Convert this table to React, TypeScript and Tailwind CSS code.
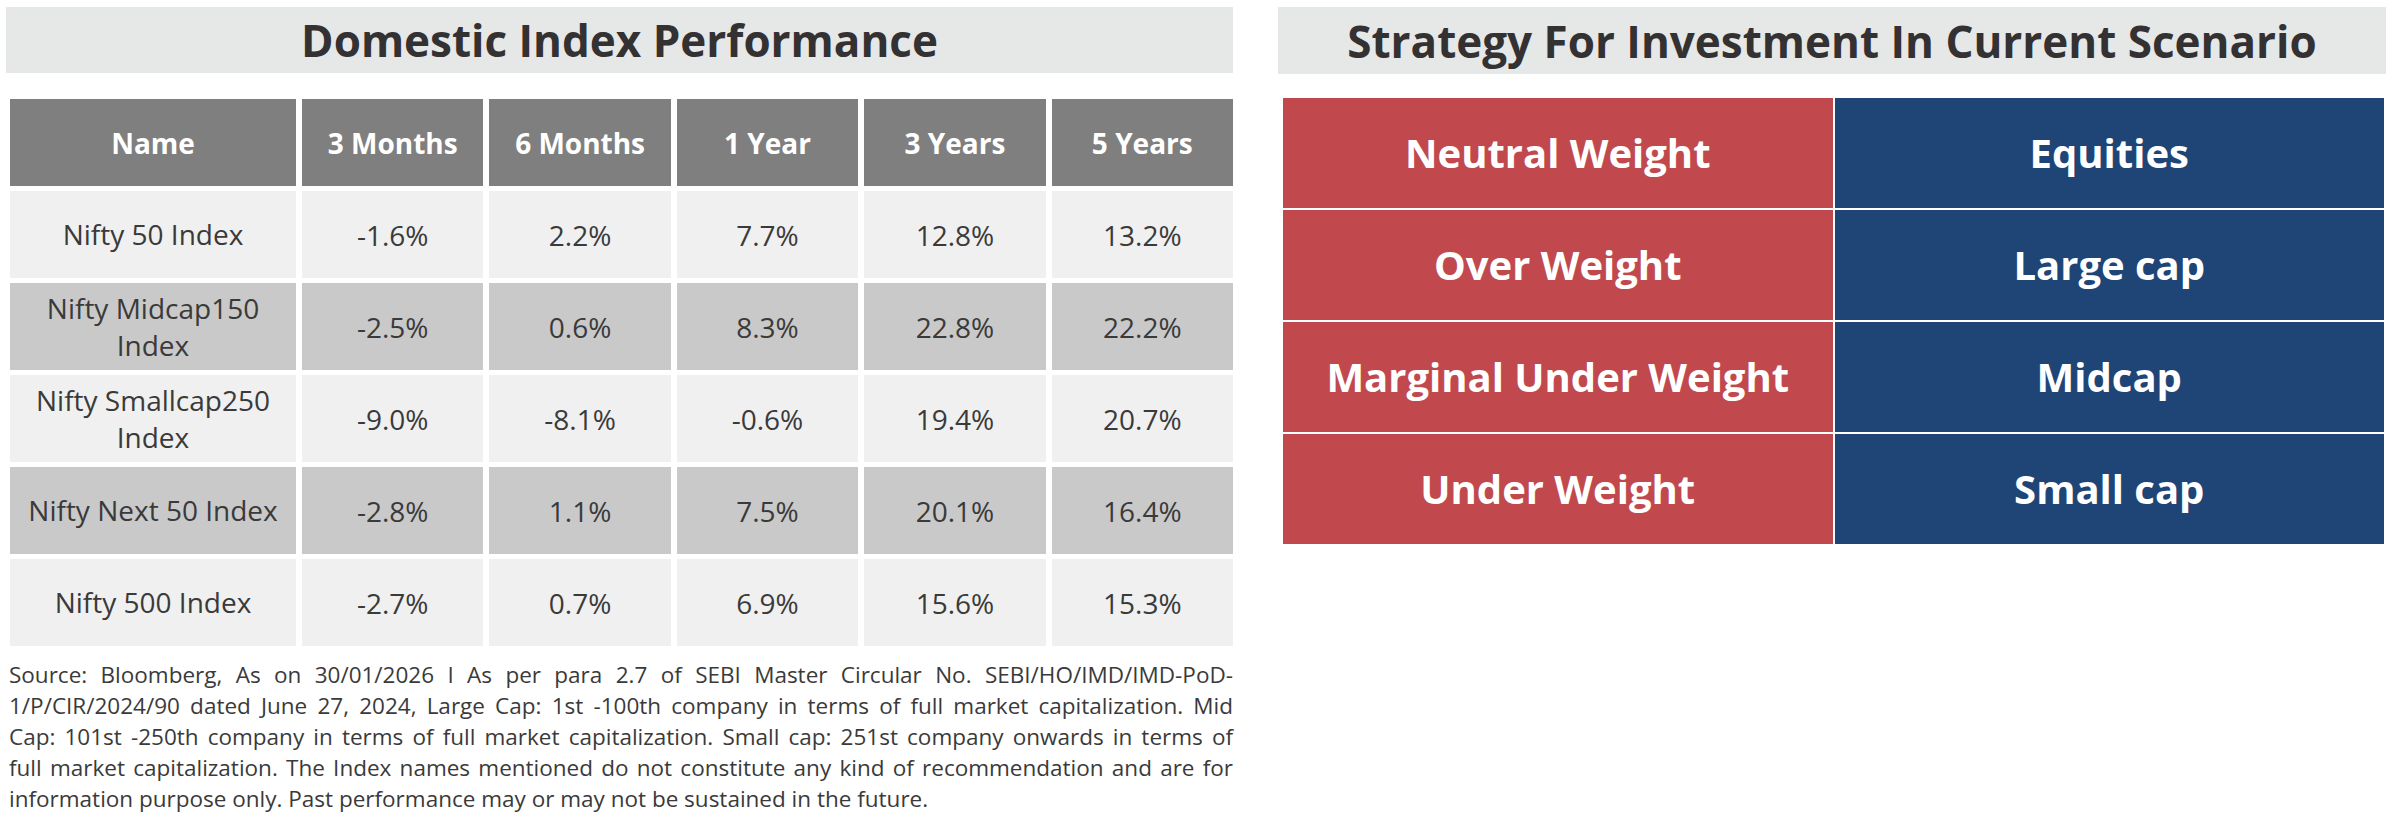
import React from "react";

const rows = [
  { name: ["Nifty 50 Index"], v: ["-1.6%", "2.2%", "7.7%", "12.8%", "13.2%"], dark: false },
  { name: ["Nifty Midcap150", "Index"], v: ["-2.5%", "0.6%", "8.3%", "22.8%", "22.2%"], dark: true },
  { name: ["Nifty Smallcap250", "Index"], v: ["-9.0%", "-8.1%", "-0.6%", "19.4%", "20.7%"], dark: false },
  { name: ["Nifty Next 50 Index"], v: ["-2.8%", "1.1%", "7.5%", "20.1%", "16.4%"], dark: true },
  { name: ["Nifty 500 Index"], v: ["-2.7%", "0.7%", "6.9%", "15.6%", "15.3%"], dark: false },
];

const headers = ["Name", "3 Months", "6 Months", "1 Year", "3 Years", "5 Years"];

const strategy = [
  ["Neutral Weight", "Equities"],
  ["Over Weight", "Large cap"],
  ["Marginal Under Weight", "Midcap"],
  ["Under Weight", "Small cap"],
];

const footLines = [
  "Source: Bloomberg, As on 30/01/2026 I As per para 2.7 of SEBI Master Circular No. SEBI/HO/IMD/IMD-PoD-",
  "1/P/CIR/2024/90 dated June 27, 2024, Large Cap: 1st -100th company in terms of full market capitalization. Mid",
  "Cap: 101st -250th company in terms of full market capitalization. Small cap: 251st company onwards in terms of",
  "full market capitalization. The Index names mentioned do not constitute any kind of recommendation and are for",
];

export default function App() {
  return (
    <div
      className="w-[2389px] h-[814px] bg-white flex pl-[6px] pt-[7px] gap-[45px] overflow-hidden"
      style={{ fontFamily: "'Open Sans', 'Noto Sans', sans-serif" }}
    >
      {/* Left panel */}
      <div className="w-[1227px] flex flex-col">
        <div className="h-[67px] bg-[#e6e7e7] flex items-center justify-center">
          <span className="text-[44px] font-bold text-[#333132] leading-none">Domestic Index Performance</span>
        </div>
        <div className="mt-[26px] ml-[4px] w-[1223px] grid grid-cols-[286px_repeat(5,1fr)] gap-x-[6px] gap-y-[5px]">
          {headers.map((h) => (
            <div key={h} className="h-[87px] bg-[#7f7f7f] flex items-center justify-center text-white font-bold text-[28px]">
              {h}
            </div>
          ))}
          {rows.map((r, i) => (
            <React.Fragment key={i}>
              <div
                className={`h-[87px] flex flex-col items-center justify-center text-[28px] leading-[37px] text-[#3a3a3a] ${
                  r.dark ? "bg-[#c9c9c9]" : "bg-[#f0f0f0]"
                }`}
              >
                {r.name.map((n) => (
                  <span key={n}>{n}</span>
                ))}
              </div>
              {r.v.map((v, j) => (
                <div
                  key={j}
                  className={`h-[87px] flex items-center justify-center text-[28px] text-[#3a3a3a] ${
                    r.dark ? "bg-[#c9c9c9]" : "bg-[#f0f0f0]"
                  }`}
                >
                  {v}
                </div>
              ))}
            </React.Fragment>
          ))}
        </div>
        <div className="mt-[13px] ml-[3px] w-[1224px] text-[22.5px] leading-[31px] text-[#3a3a3a]">
          {footLines.map((l) => (
            <div key={l} className="text-justify [text-align-last:justify] whitespace-nowrap">
              {l}
            </div>
          ))}
          <div>information purpose only. Past performance may or may not be sustained in the future.</div>
        </div>
      </div>

      {/* Right panel */}
      <div className="w-[1108px] flex flex-col">
        <div className="h-[67px] bg-[#e6e7e7] flex items-center justify-center">
          <span className="text-[44px] font-bold text-[#333132] leading-none">
            Strategy For Investment In Current Scenario
          </span>
        </div>
        <div className="mt-[24px] ml-[5px] w-[1101px] grid grid-cols-2 gap-x-[2px] gap-y-[2px]">
          {strategy.map(([a, b]) => (
            <React.Fragment key={a}>
              <div className="h-[110px] bg-[#c1494e] flex items-center justify-center text-white font-bold text-[40px]">
                {a}
              </div>
              <div className="h-[110px] bg-[#1f4577] flex items-center justify-center text-white font-bold text-[40px]">
                {b}
              </div>
            </React.Fragment>
          ))}
        </div>
      </div>
    </div>
  );
}
